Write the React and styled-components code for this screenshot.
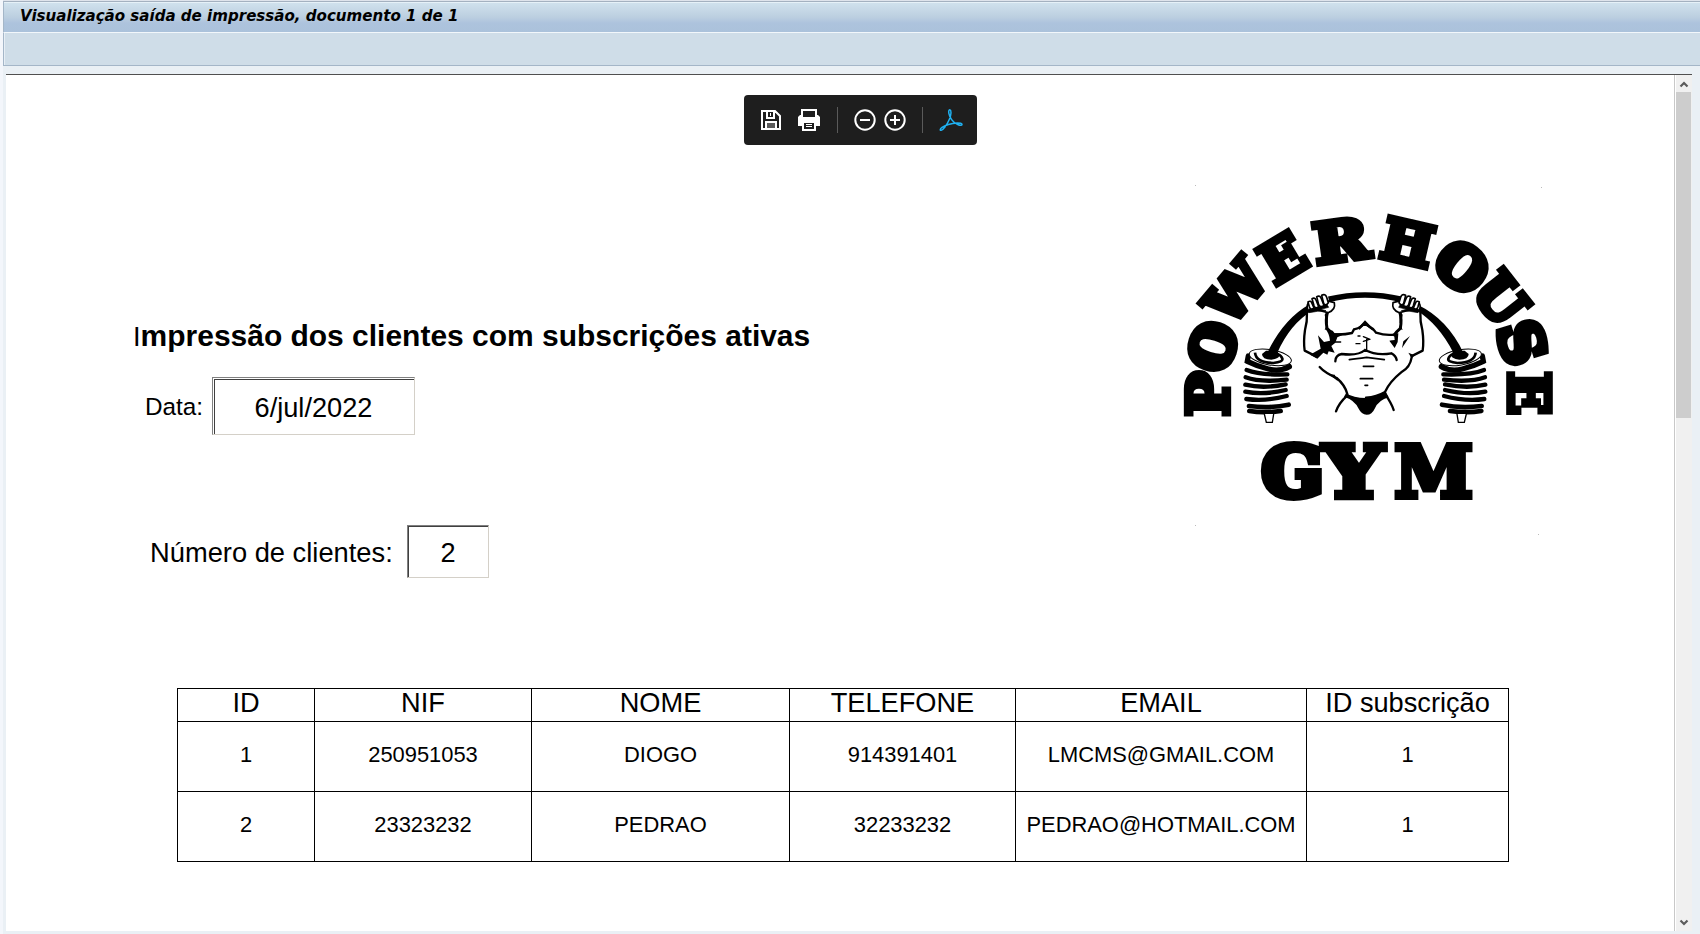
import React from 'react';
import styled, { createGlobalStyle } from 'styled-components';

const Global = createGlobalStyle`
  * { box-sizing: border-box; }
  html, body { margin: 0; padding: 0; overflow: hidden; background: #e9f0f6; }
`;

const Window = styled.div`
  width: 1700px;
  height: 934px;
  padding: 1px 0 0 3px;
  background: #eaf0f5;
  box-shadow: inset 3px 0 0 #f3f6fb, inset 0 1px 0 #dfe4ec;
  display: flex;
  flex-direction: column;
  font-family: "Liberation Sans", Arial, sans-serif;
  color: #000;
`;

const TitleBar = styled.header`
  height: 31px;
  border-top: 1px solid #a4b1c0;
  border-left: 1px solid #a4b6c8;
  background: linear-gradient(#e6f1f8 0 1px, #d0e1ed 1px, #bccfe0 50%, #adc3dd 70%, #abc2db);
  padding: 4px 0 0 16px;
  flex: none;
`;

const Title = styled.h1`
  margin: 0;
  font: italic bold 15.07px/20px "DejaVu Sans", Verdana, sans-serif;
  white-space: nowrap;
`;

const ToolStrip = styled.div`
  height: 34px;
  flex: none;
  border-top: 1px solid #f2f7fb;
  border-left: 1px solid #a4b6c8;
  border-bottom: 1px solid #a4b6c8;
  background: #cfdde8;
  box-shadow: inset 1px 0 0 #e6eef5;
`;

const Viewer = styled.main`
  width: 1686px;
  height: 857px;
  margin: 8px 0 0 3px;
  flex: none;
  border-top: 1px solid #505050;
  display: flex;
  background: #fff;
`;

const Page = styled.section`
  width: 1669px;
  flex: none;
  border-right: 1px solid #c8c8c8;
  display: flex;
  flex-direction: column;
`;

const ScrollBar = styled.div`
  width: 16px;
  margin-left: 1px;
  background: #f0f0f0;
  display: flex;
  flex-direction: column;
`;

const Arrow = styled.svg`
  width: 16px;
  height: 17px;
  flex: none;
  fill: none;
  stroke: #5b5b5b;
  stroke-width: 2.2;
`;

const Thumb = styled.div`
  width: 15px;
  height: 326px;
  background: #cdcdcd;
`;

const Spacer = styled.div`
  flex: 1;
`;

const PdfToolbar = styled.nav`
  width: 233px;
  height: 50px;
  margin: 20px 0 0 738px;
  border-radius: 4px;
  background: #1e1e1e;
  display: flex;
  align-items: center;
  padding-left: 16px;
  flex: none;
`;

const Icon = styled.svg`
  width: ${(p) => p.$w || 22}px;
  height: 22px;
  margin-right: ${(p) => p.$gap || 0}px;
  fill: none;
  stroke: ${(p) => p.$color || '#fff'};
  stroke-width: 2;
  flex: none;
`;

const Divider = styled.i`
  width: 1px;
  height: 26px;
  margin-right: ${(p) => p.$gap}px;
  background: #5a5a5a;
  flex: none;
`;

const Top = styled.div`
  height: 543px;
  flex: none;
  display: flex;
`;

const Form = styled.div`
  width: 1164px;
  padding: 171px 0 0 127px;
`;

const Heading = styled.h2`
  margin: 0 0 21px;
  height: 40px;
  font-size: 29.98px;
  line-height: 40px;
  white-space: nowrap;
  span { font-weight: 400; font-size: 27.3px; }
`;

const Field = styled.div`
  display: flex;
  align-items: center;
  margin-left: ${(p) => p.$indent}px;
  height: ${(p) => p.$h}px;
  margin-bottom: ${(p) => p.$after || 0}px;
`;

const Label = styled.label`
  width: ${(p) => p.$w}px;
  padding-top: 2px;
  font-size: ${(p) => p.$size}px;
  line-height: 32px;
  white-space: nowrap;
`;

const Value = styled.output`
  width: ${(p) => p.$w}px;
  height: 100%;
  padding-top: 3px;
  border: 1px solid;
  border-color: #808080 #d4d0c8 #d4d0c8 #808080;
  display: flex;
  align-items: center;
  justify-content: center;
  font-size: 27.2px;
  box-shadow: ${(p) => (p.$wide ? 'inset 1px 1px 0 #fff, inset 2px 2px 0 #404040' : 'inset 1px 1px 0 #404040')};
`;

const Logo = styled.svg`
  width: 400px;
  height: 370px;
  margin-top: 30px;
  flex: none;
`;

const LogoText = styled.text`
  font-family: "DejaVu Serif", serif;
  font-weight: 700;
  fill: #000;
  stroke: #000;
  stroke-linejoin: miter;
`;

const Clients = styled.table`
  width: 1331px;
  margin-left: 171px;
  table-layout: fixed;
  border-collapse: collapse;
  th, td { border: 1px solid #000; text-align: center; white-space: nowrap; padding: 0; font-weight: 400; }
  th { height: 33px; font-size: 27.2px; line-height: 28px; padding-bottom: 4px; }
  td { height: 70px; font-size: 21.9px; line-height: 26px; padding-bottom: 4px; }
`;

const columns = [
  ['ID', 137], ['NIF', 217], ['NOME', 258], ['TELEFONE', 226], ['EMAIL', 291], ['ID subscrição', 202],
];
const rows = [
  ['1', '250951053', 'DIOGO', '914391401', 'LMCMS@GMAIL.COM', '1'],
  ['2', '23323232', 'PEDRAO', '32233232', 'PEDRAO@HOTMAIL.COM', '1'],
];

// letter, centre x, centre y, rotation, width, cap height, stroke
const letters = [
  ['P', 112, 657, -90, 142, 141, 19],
  ['O', 128, 514, -72, 154, 146, 25],
  ['W', 197, 348, -50, 200, 136, 18],
  ['E', 338, 248, -31, 138, 139, 17],
  ['R', 513, 196, -8, 174, 139, 19],
  ['H', 713, 202, 13, 162, 142, 20],
  ['O', 876, 275, 38, 160, 146, 25],
  ['U', 993, 370, 52, 154, 141, 20],
  ['S', 1057, 502, 73, 138, 148, 22],
  ['E', 1078, 655, 90, 139, 141, 17],
  ['G', 368, 887, 0, 196, 174, 24],
  ['Y', 550, 887, 0, 190, 175, 19],
  ['M', 791, 887, 0, 244, 175, 18],
];

function Letter({ spec: [ch, cx, cy, rot, w, h, s] }) {
  const size = (h - s) / 0.729;
  return (
    <LogoText
      transform={`translate(${cx} ${cy}) rotate(${rot})`}
      x={-w / 2 + s / 4}
      y={h / 2 - s / 2}
      fontSize={size}
      strokeWidth={s}
      textLength={w - s / 2}
      lengthAdjust="spacingAndGlyphs"
    >
      {ch}
    </LogoText>
  );
}

function Weight({ mirror }) {
  return (
    <g transform={mirror ? 'translate(812 0) scale(-1 1)' : undefined}>
      <g fill="none" stroke="#000" strokeWidth="13" strokeLinecap="round">
        <path d="M55 228L52 244Q80 258 115 267T178 260" strokeWidth="16" />
        <path d="M50 270Q90 286 172 283" />
        <path d="M47 292Q90 308 170 299" />
        <path d="M46 314Q100 327 167 313" />
        <path d="M46 335Q100 346 167 330" />
        <path d="M49 357Q105 365 170 348" />
        <path d="M57 378Q120 386 176 374" strokeWidth="14" />
        <path d="M58 393Q100 400 152 393" strokeWidth="14" />
      </g>
      <ellipse cx="121" cy="232" rx="64" ry="23" fill="#fff" stroke="#000" strokeWidth="3" transform="rotate(10 121 232)" />
      <path d="M75 218Q78 248 130 249Q160 246 157 236Q154 226 143 223" fill="none" stroke="#000" strokeWidth="8" />
      <path d="M96 222Q96 239 124 239Q150 236 148 222L140 212H108Z" />
      <path d="M103 402L109 427H127L131 402" fill="#fff" stroke="#000" strokeWidth="4" />
    </g>
  );
}

function Arm({ mirror }) {
  return (
    <g transform={mirror ? 'translate(802 0) scale(-1 1)' : undefined} fill="#fff" stroke="#000" strokeWidth="5" strokeLinejoin="round">
      <path d="M232 98L222 150V215L262 233L310 220L314 165L288 145L290 100Z" stroke="none" />
      <path d="M231 96Q232 125 225 150Q220 185 224 212Q240 220 260 230" fill="none" strokeWidth="7" />
      <path d="M293 93Q286 120 291 145Q302 154 312 168" fill="none" strokeWidth="9" />
      <path d="M284 104L293 92V128L284 150L292 146Z" fill="#000" stroke="none" />
      <path d="M234 70Q228 80 236 94L262 90L294 98Q318 90 313 68L290 62Z" />
      <path d="M236 88L262 80L290 72L296 82L272 88L288 92L262 94L238 98Z" fill="#000" strokeWidth="2" />
      <path d="M234 66Q242 60 246 70L252 84Q242 92 238 80Z" />
      <path d="M246 56Q255 51 259 62L266 80Q256 88 252 77Z" />
      <path d="M260 50Q270 45 274 56L282 76Q271 84 266 74Z" />
      <path d="M275 46Q286 40 290 52L295 68Q287 80 281 70Z" />
    </g>
  );
}

function Lifter() {
  return (
    <g transform="translate(180 315)">
      <path d="M112 218Q160 118 236 74L246 92Q180 132 142 218Z" />
      <path d="M700 218Q652 118 566 76L558 90Q626 132 670 218Z" />
      <path d="M296 58Q405 32 514 58" fill="none" stroke="#000" strokeWidth="17" />
      <Weight />
      <Weight mirror />
      <path d="M118 208H142L146 232H104ZM670 208H694L708 232H666Z" />
      <Arm />
      <Arm mirror />
      <g fill="none" stroke="#000" strokeWidth="7" strokeLinecap="round">
        <path d="M312 163Q340 165 366 159L372 148Q385 145 393 139Q405 128 418 140Q430 145 438 158Q470 168 495 163" />
        <path d="M316 244Q316 226 335 222Q385 228 405 210Q440 228 484 220Q498 228 500 240" />
        <path d="M400 170L420 178M400 184L418 178M410 178V214M400 214H420M378 191H390M384 168H390M316 186H332M482 184H494" strokeWidth="4" />
        <path d="M358 239Q378 236 410 232Q440 236 463 239M400 259H431M391 296H428M405 316H413" strokeWidth="5" />
        <path d="M269 261Q284 278 320 294Q345 315 352 342" />
        <path d="M545 232Q540 262 516 275Q478 306 465 336Q440 351 408 353" />
        <path d="M352 346Q326 370 318 394M464 340Q486 372 491 390" />
      </g>
      <path d="M386 142L405 121L424 140Q434 150 438 156L425 150L410 138L400 138L388 150Z" />
      <path d="M264 166L282 186L300 182Q298 160 286 146L308 152L314 160L350 160L322 172L316 188L304 198L314 218L296 214L292 224L280 218L262 236L240 224L272 206Z" />
      <path d="M492 160L505 160L503 186L494 204L478 182L494 180ZM540 168L516 204L520 184ZM516 208L520 216M535 218L545 235L554 226Z" />
      <path d="M348 340Q370 354 408 354Q450 350 466 332L476 352Q446 360 434 386Q426 404 410 404Q394 403 386 386Q374 360 342 350Z" />
      <path d="M295 282L314 284L324 304Z" />
    </g>
  );
}

function SaveIcon() {
  return (
    <Icon viewBox="0 0 22 22" $gap={16}>
      <path d="M2 2H15L20 7V20H2ZM7 2V9H14V2M6 20V13H16V20" />
      <path d="M7 14H15V19H7Z" fill="#5c5c5c" stroke="none" />
      <path d="M10.500 4V7" strokeWidth="1" />
    </Icon>
  );
}

function PrintIcon() {
  return (
    <Icon viewBox="0 0 22 22" $gap={17}>
      <path d="M2 6H20L22 8V17H0V8Z" fill="#fff" stroke="none" />
      <path d="M4 1H18V10H4Z" fill="#1e1e1e" />
      <path d="M3 6H19V11H3Z" fill="#fff" stroke="none" />
      <path d="M5 2H17V8H5Z" fill="#1e1e1e" stroke="none" />
      <path d="M5 13H17V21H5Z" fill="#1e1e1e" />
      <path d="M8 15.500H14M8 17.500H14" strokeWidth="1" />
    </Icon>
  );
}

export default function App() {
  return (
    <>
      <Global />
      <Window>
        <TitleBar><Title>Visualização saída de impressão, documento 1 de 1</Title></TitleBar>
        <ToolStrip />
        <Viewer>
          <Page>
            <PdfToolbar>
              <SaveIcon />
              <PrintIcon />
              <Divider $gap={16} />
              <Icon viewBox="0 0 22 22" $gap={8}><circle cx="11" cy="11" r="9.700" /><path d="M6 11H16" /></Icon>
              <Icon viewBox="0 0 22 22" $gap={16}><circle cx="11" cy="11" r="9.700" /><path d="M6 11H16M11 6V16" /></Icon>
              <Divider $gap={16} />
              <Icon viewBox="0 0 24 22" $w={24} $color="#1fb0f0">
                <path d="M10.800 .8C8.700 1 9.800 6.600 12.600 10.600C15.500 14.800 22.600 17.800 23 15.600C23 13.200 14.800 13.600 9.400 15.500C4.500 17.200 .8 19.600 1.300 21.100C3.500 22.600 8.400 15 10.500 10C12.200 6 12.600 1.100 10.800 .8Z" strokeWidth="1.500" />
              </Icon>
            </PdfToolbar>
            <Top>
              <Form>
                <Heading><span>I</span>mpressão dos clientes com subscrições ativas</Heading>
                <Field $indent={12} $h={58} $after={90}>
                  <Label $w={67} $size={24.3}>Data:</Label>
                  <Value $w={203} $wide>6/jul/2022</Value>
                </Field>
                <Field $indent={17} $h={53}>
                  <Label $w={257} $size={27.3}>Número de clientes:</Label>
                  <Value $w={82}>2</Value>
                </Field>
              </Form>
              <Logo viewBox="0 0 1200 1110">
                {letters.map((spec, i) => <Letter key={i} spec={spec} />)}
                <Lifter />
                <path d="M75 30h3v3h-3zM1113 36h3v3h-3zM75 1050h3v3h-3zM1104 1077h3v3h-3z" fill="#bbb" />
              </Logo>
            </Top>
            <Clients>
              <colgroup>{columns.map(([name, w]) => <col key={name} width={w} />)}</colgroup>
              <thead><tr>{columns.map(([name]) => <th key={name}>{name}</th>)}</tr></thead>
              <tbody>
                {rows.map((row) => (
                  <tr key={row[0]}>{row.map((cell, i) => <td key={i}>{cell}</td>)}</tr>
                ))}
              </tbody>
            </Clients>
          </Page>
          <ScrollBar>
            <Arrow viewBox="0 0 16 17"><path d="M4.500 11.500L8 8L11.500 11.500" /></Arrow>
            <Thumb />
            <Spacer />
            <Arrow viewBox="0 0 16 17"><path d="M4.500 6.500L8 10L11.500 6.500" /></Arrow>
          </ScrollBar>
        </Viewer>
      </Window>
    </>
  );
}
